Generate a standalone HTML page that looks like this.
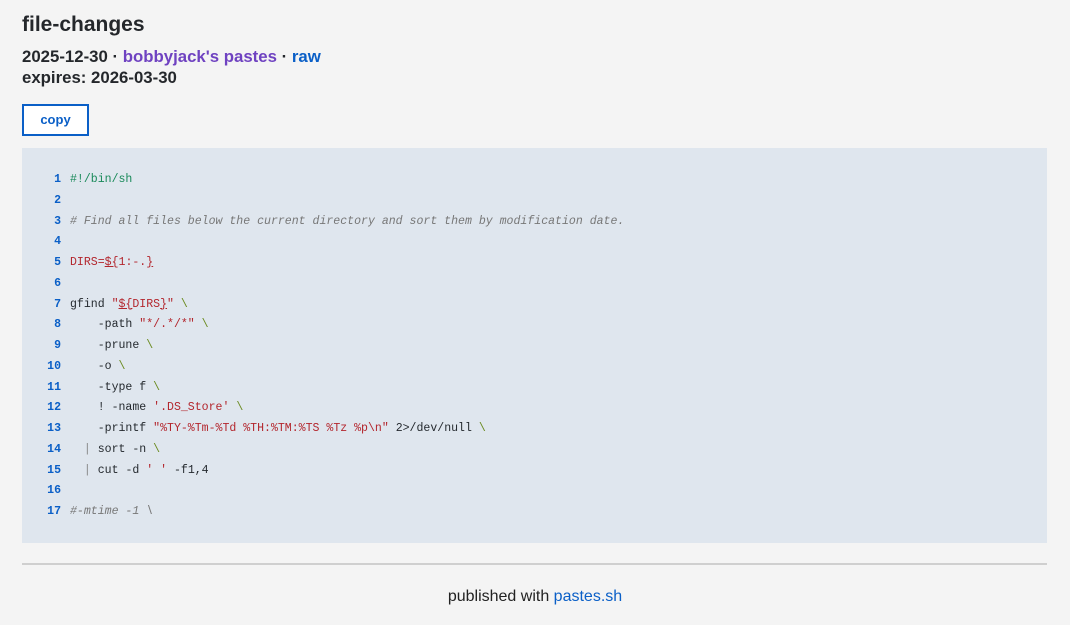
<!DOCTYPE html>
<html><head><meta charset="utf-8"><style>
body{margin:0;background:#f4f4f4;font-family:"Liberation Sans",sans-serif;color:#222;width:1070px;height:625px;overflow:hidden;position:relative}
.a{position:absolute;white-space:nowrap}
h1{margin:0;font-size:21px;font-weight:bold;color:#24272b}
.sub{font-size:16.8px;letter-spacing:0;font-weight:bold;color:#24272b;line-height:21px}
.p{color:#6f42c1}.b{color:#0a5fc7}
.btn{left:22px;top:104px;width:63px;height:28px;border:2px solid #0a5fc7;color:#0a5fc7;font-size:13px;font-weight:bold;text-align:center;line-height:28px;background:#fff}
.code{left:22px;top:148px;width:1025px;height:395px;background:#dfe6ee}
pre{position:absolute;left:0;top:170px;margin:0;font-family:"Liberation Mono",monospace;font-size:11.55px;line-height:20.75px;color:#24292e}
.n{display:inline-block;width:61px;text-align:right;color:#0a5fc7;padding-right:9px;font-weight:bold}
.g{color:#1a8a5a}.c{color:#777;font-style:italic}.r{color:#b3262d}.u{text-decoration:underline}.k{color:#6a8a1f}.pp{color:#888}
hr{position:absolute;left:22px;top:563px;width:1025px;margin:0;border:0;border-top:2px solid #cfcfcf}
.f{top:588px;left:0;width:1070px;text-align:center;font-size:16px}
</style></head><body>
<h1 class="a" style="left:22px;top:13px">file-changes</h1>
<div class="a sub" style="left:22px;top:46px">2025-12-30 · <span class="p">bobbyjack's pastes</span> · <span class="b">raw</span><br>expires: 2026-03-30</div>
<div class="a btn">copy</div>
<div class="a code"></div>
<pre><span class="n">1</span><span class="g">#!/bin/sh</span>
<span class="n">2</span>
<span class="n">3</span><span class="c"># Find all files below the current directory and sort them by modification date.</span>
<span class="n">4</span>
<span class="n">5</span><span class="r">DIRS=<span class="u">${</span>1:-.<span class="u">}</span></span>
<span class="n">6</span>
<span class="n">7</span>gfind <span class="r">"<span class="u">${</span>DIRS<span class="u">}</span>"</span> <span class="k">\</span>
<span class="n">8</span>    -path <span class="r">"*/.*/*"</span> <span class="k">\</span>
<span class="n">9</span>    -prune <span class="k">\</span>
<span class="n">10</span>    -o <span class="k">\</span>
<span class="n">11</span>    -type f <span class="k">\</span>
<span class="n">12</span>    ! -name <span class="r">'.DS_Store'</span> <span class="k">\</span>
<span class="n">13</span>    -printf <span class="r">"%TY-%Tm-%Td %TH:%TM:%TS %Tz %p\n"</span> 2&gt;/dev/null <span class="k">\</span>
<span class="n">14</span>  <span class="pp">|</span> sort -n <span class="k">\</span>
<span class="n">15</span>  <span class="pp">|</span> cut -d <span class="r">' '</span> -f1,4
<span class="n">16</span>
<span class="n">17</span><span class="c">#-mtime -1 \</span></pre>
<hr>
<div class="a f">published with <span class="b" style="font-weight:normal">pastes.sh</span></div>
</body></html>
